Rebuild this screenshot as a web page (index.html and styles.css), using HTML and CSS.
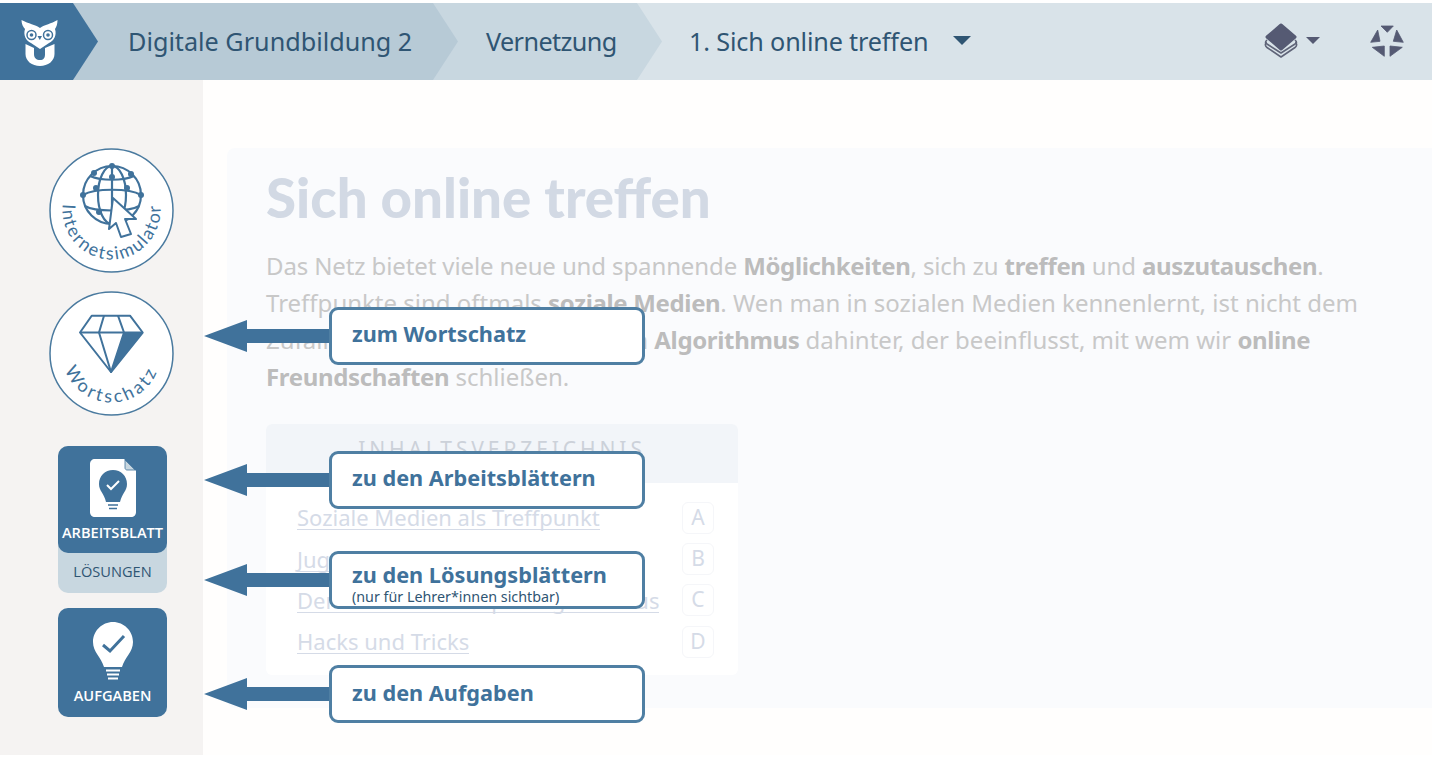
FILE: index.html
```html
<!DOCTYPE html>
<html lang="de">

<head>
    <meta charset="UTF-8">
    <meta name="viewport" content="width=device-width, initial-scale=1.0">
    <title>Sich online treffen - Digitale Grundbildung 2</title>
    <link rel="stylesheet" href="styles.css">
</head>

<body>
    <header class="topbar">
        <a class="crumb crumb-logo" href="#">
            <svg class="owl" viewBox="0 0 38 48" width="38" height="48">
                <path fill="#fff" d="M0.500 1 C8 5 14 5.500 19 9 C24 5.500 30 5 36.500 1 C36.500 5 35.500 8 34 10 C36 16 33 22 28 24 L19 30 L10 24 C5 22 2 16 4 10 C2 8 0.500 5 0.500 1 Z"/>
                <path fill="#fff" d="M4.500 25 L13 29 V35 C13 39 15.500 41 19 41 C22.500 41 24 39 24 35 V29 L33.500 25 V35 C33.500 42 27 47 19 47 C11 47 4.500 42 4.500 35 Z"/>
                <circle cx="10.500" cy="16" r="4.500" fill="none" stroke="#40729b" stroke-width="1.500"/>
                <circle cx="27" cy="16" r="4.500" fill="none" stroke="#40729b" stroke-width="1.500"/>
                <circle cx="10.500" cy="16" r="1.800" fill="#40729b"/>
                <circle cx="27" cy="16" r="1.800" fill="#40729b"/>
                <path fill="#40729b" d="M16.500 17 L21 17 L18.800 21 Z"/>
            </svg>
        </a>
        <a class="crumb crumb-course" href="#">Digitale Grundbildung 2</a>
        <a class="crumb crumb-topic" href="#">Vernetzung</a>
        <div class="crumb crumb-page">
            <span class="page-name">1. Sich online treffen</span>
            <span class="caret caret-dark"></span>
            <div class="tools">
                <button class="tool tool-layers">
                    <svg viewBox="0 0 34 36" width="34" height="36">
                        <path d="M2.500 19 C1 21 1 23 3 24.500 L17 34 L31 24.500 C33 23 33 21 31.500 19" fill="none" stroke="#5f6478" stroke-width="1.600" stroke-linejoin="round"/>
                        <path d="M3 17 C1 19 1 20 3 21 L17 30 L31 21 C33 20 33 19 31 17" fill="none" stroke="#5f6478" stroke-width="1.600" stroke-linejoin="round"/>
                        <path d="M17 2 L31 14 L17 26 L3 14 Z" fill="#555a73" stroke="#555a73" stroke-width="3" stroke-linejoin="round"/>
                    </svg>
                    <span class="caret"></span>
                </button>
                <button class="tool tool-star">
                    <svg viewBox="0 0 34 34" width="34" height="34">
                        <path fill="#555a73" stroke="#555a73" stroke-width="0.800" stroke-linejoin="round" d="M11 2 L23.300 2 L17.300 8.300 Z M26.700 6 L33.300 18.300 L23.300 17.300 Z M7.700 6 L0.700 18.300 L10 17.300 Z M2.300 23.300 L14.300 22 L14.300 32.300 Z M20 22 L32.300 23.300 L20 32.300 Z"/>
                    </svg>
                </button>
            </div>
        </div>
    </header>

    <div class="layout">
        <aside class="sidebar">
            <a class="round-link" href="#">
                <svg viewBox="0 0 125 125" width="125" height="125">
                    <defs>
                        <path id="arcSim" d="M62.500 13.500 A49 49 0 0 0 62.500 111.500 A49 49 0 0 0 62.500 13.500"/>
                    </defs>
                    <circle cx="62.500" cy="62.500" r="61.500" fill="#fff" stroke="#4a7a9f" stroke-width="1.500"/>
                    <g fill="none" stroke="#40729b" stroke-width="2.200">
                        <circle cx="63" cy="47" r="29"/>
                        <ellipse cx="63" cy="47" rx="14" ry="29"/>
                        <path d="M63 18 V76"/>
                        <path d="M41 28 C52 33 74 33 85 28"/>
                        <path d="M34 47 C46 40 80 40 92 47"/>
                        <path d="M36 58 C46 64 80 64 90 58"/>
                    </g>
                    <g fill="#40729b">
                        <circle cx="63" cy="18" r="3"/>
                        <circle cx="45" cy="25" r="3"/>
                        <circle cx="82" cy="26" r="3"/>
                        <circle cx="34" cy="47" r="3"/>
                        <circle cx="92" cy="47" r="3"/>
                        <circle cx="63" cy="29" r="3"/>
                        <circle cx="47" cy="40" r="3"/>
                        <circle cx="78" cy="40" r="3"/>
                        <circle cx="50" cy="64" r="3"/>
                    </g>
                    <path d="M64 50 L87 71 L76 71 L82 86 L72 89 L67 75 L60 81 Z" fill="#fff" stroke="#40729b" stroke-width="2" stroke-linejoin="round"/>
                    <text class="arc-text"><textPath href="#arcSim" startOffset="50%" text-anchor="middle">Internetsimulator</textPath></text>
                </svg>
            </a>
            <a class="round-link" href="#">
                <svg viewBox="0 0 125 125" width="125" height="125">
                    <defs>
                        <path id="arcWort" d="M62.500 13.500 A49 49 0 0 0 62.500 111.500 A49 49 0 0 0 62.500 13.500"/>
                    </defs>
                    <circle cx="62.500" cy="62.500" r="61.500" fill="#fff" stroke="#4a7a9f" stroke-width="1.500"/>
                    <path d="M75 41.500 L93.500 41.500 L62 81 Z" fill="#40729b"/>
                    <g fill="none" stroke="#40729b" stroke-width="2" stroke-linejoin="round">
                        <path d="M42.700 24.700 L81 24.700 L93.700 41.500 L62 81 L31 41.500 Z"/>
                        <path d="M31 41.500 H93.700"/>
                        <path d="M55 24.700 L50 41.500 L62 81 L75 41.500 L69 24.700"/>
                    </g>
                    <text class="arc-text arc-wide"><textPath href="#arcWort" startOffset="50%" text-anchor="middle">Wortschatz</textPath></text>
                </svg>
            </a>
            <div class="sheet-group">
                <a class="tile tile-sheet" href="#">
                    <svg viewBox="0 0 46 58" width="46" height="58">
                        <path fill="#fff" d="M5 0 H34 L46 12 V53 C46 56 44 58 41 58 H5 C2 58 0 56 0 53 V5 C0 2 2 0 5 0 Z"/>
                        <path fill="#c8d7e0" d="M35 1 L45 11 L37 11 C36 11 35 10 35 9 Z" stroke="#40729b" stroke-width="0.800"/>
                        <path fill="#40729b" d="M23 11 C31 11 37 17 37 25 C37 32 32 34 30 43 L16 43 C14 34 9 32 9 25 C9 17 15 11 23 11 Z"/>
                        <path d="M17 26 L21 30 L29 22" fill="none" stroke="#fff" stroke-width="2"/>
                        <path d="M18 46 H28 M19 49.500 H27" stroke="#40729b" stroke-width="1.500"/>
                    </svg>
                    <span>ARBEITSBLATT</span>
                </a>
                <a class="solutions" href="#">LÖSUNGEN</a>
            </div>
            <a class="tile tile-tasks" href="#">
                <svg viewBox="0 0 42 60" width="42" height="60">
                    <path fill="#fff" d="M21 1 C32 1 41 10 41 21 C41 31 33 36 30 46 L12 46 C9 36 1 31 1 21 C1 10 10 1 21 1 Z"/>
                    <path d="M11 24 L18 30 L32 15" fill="none" stroke="#40729b" stroke-width="3"/>
                    <path d="M14 49.500 H28 M15 53.500 H27 M16 57.500 H26" stroke="#fff" stroke-width="2"/>
                </svg>
                <span>AUFGABEN</span>
            </a>
        </aside>

        <main class="content">
            <article class="card">
                <h1>Sich online treffen</h1>
                <p class="intro">
                    <span class="tight">Das Netz bietet viele neue und spannende <b>Möglichkeiten</b>, sich zu <b>treffen</b> und <b>auszutauschen</b>.</span><br>
                    Treffpunkte sind oftmals <b>soziale Medien</b>. Wen man in sozialen Medien kennenlernt, ist nicht dem<br>
                    Zufall überlassen, es steckt oft ein <b>Algorithmus</b> dahinter, der beeinflusst, mit wem wir <b>online</b><br>
                    <b>Freundschaften</b> schließen.
                </p>
                <section class="toc">
                    <h2>INHALTSVERZEICHNIS</h2>
                    <ul>
                        <li><a href="#">Soziale Medien als Treffpunkt</a><span class="badge">A</span></li>
                        <li><a href="#">Jugendliche im Netz</a><span class="badge">B</span></li>
                        <li><a href="#">Der Freundeskreis per Algorithmus</a><span class="badge">C</span></li>
                        <li><a href="#">Hacks und Tricks</a><span class="badge">D</span></li>
                    </ul>
                </section>
            </article>
        </main>
    </div>

    <!-- hinweise liegen ueber der seite -->
    <div class="hint hint-words">
        <svg class="arrow" viewBox="0 0 126 32" width="126" height="32"><path d="M0 16 L43 0 V9 H126 V23 H43 V32 Z"/></svg>
        <div class="hint-box"><strong>zum Wortschatz</strong></div>
    </div>
    <div class="hint hint-sheets">
        <svg class="arrow" viewBox="0 0 126 32" width="126" height="32"><path d="M0 16 L43 0 V9 H126 V23 H43 V32 Z"/></svg>
        <div class="hint-box"><strong>zu den Arbeitsblättern</strong></div>
    </div>
    <div class="hint hint-solutions">
        <svg class="arrow" viewBox="0 0 126 32" width="126" height="32"><path d="M0 16 L43 0 V9 H126 V23 H43 V32 Z"/></svg>
        <div class="hint-box"><strong>zu den Lösungsblättern</strong><small>(nur für Lehrer*innen sichtbar)</small></div>
    </div>
    <div class="hint hint-tasks">
        <svg class="arrow" viewBox="0 0 126 32" width="126" height="32"><path d="M0 16 L43 0 V9 H126 V23 H43 V32 Z"/></svg>
        <div class="hint-box"><strong>zu den Aufgaben</strong></div>
    </div>
</body>

</html>
```

FILE: styles.css
```css
* {
    margin: 0;
    padding: 0;
    box-sizing: border-box;
}

body {
    font-family: "Noto Sans", Arial, sans-serif;
    background-color: #fff;
    height: 758px;
    overflow: hidden;
    padding-top: 3px;
    position: relative;
}

a {
    text-decoration: none;
}

.topbar {
    display: flex;
    height: 77px;
    background-color: #d9e3e9;
}

.crumb {
    display: flex;
    align-items: center;
    height: 100%;
    padding-bottom: 2px;
    font-size: 25.200px;
    color: #2f5573;
    clip-path: polygon(0 0, calc(100% - 25px) 0, 100% 50%, calc(100% - 25px) 100%, 0 100%);
    margin-left: -25px;
}

.crumb-logo {
    position: relative;
    z-index: 3;
    width: 98px;
    margin-left: 0;
    padding-left: 21px;
    padding-top: 2px;
    padding-bottom: 0;
    background-color: #40729b;
}

.crumb-course {
    position: relative;
    z-index: 2;
    width: 385px;
    padding-left: 55px;
    background-color: #b7cad6;
}

.crumb-topic {
    position: relative;
    z-index: 1;
    width: 229px;
    padding-left: 53px;
    letter-spacing: -0.600px;
    background-color: #c8d7e0;
}

.crumb-page {
    flex: 1;
    padding-left: 52px;
    clip-path: none;
    background-color: transparent;
}

.page-name {
    letter-spacing: -0.150px;
}

.caret {
    display: inline-block;
    width: 0;
    height: 0;
    border-left: 7px solid transparent;
    border-right: 7px solid transparent;
    border-top: 7px solid #555a73;
}

.caret-dark {
    margin-left: 25px;
    border-left-width: 9px;
    border-right-width: 9px;
    border-top: 9px solid #2f5573;
}

.tools {
    display: flex;
    align-items: center;
    margin-left: auto;
    padding-right: 28px;
    gap: 50px;
}

.tool {
    display: flex;
    align-items: center;
    gap: 8px;
    background: none;
    border: none;
}

.layout {
    display: flex;
    height: 675px;
}

.sidebar {
    width: 203px;
    background-color: #f5f3f2;
    display: flex;
    flex-direction: column;
    padding: 68px 0 0 49px;
}

.round-link {
    display: block;
    width: 125px;
    height: 125px;
    margin-bottom: 18px;
}

.round-link + .sheet-group {
    margin-top: 12px;
}

.arc-text {
    font-family: "Lato", sans-serif;
    font-size: 18px;
    letter-spacing: 1.800px;
    fill: #40729b;
}

.arc-wide {
    letter-spacing: 3px;
}

.sheet-group {
    width: 109px;
    margin-left: 9px;
    border-radius: 10px;
    background-color: #c8d7e0;
    margin-bottom: 15px;
}

.tile {
    display: flex;
    flex-direction: column;
    align-items: center;
    width: 109px;
    height: 107px;
    background-color: #40729b;
    border-radius: 10px;
    color: #fff;
    font-family: "Open Sans", sans-serif;
    font-size: 14.600px;
    font-weight: 600;
    padding-top: 13px;
}

.tile span {
    margin-top: 5px;
    white-space: nowrap;
}

.tile-tasks {
    margin-left: 9px;
    height: 109px;
}

.tile-tasks span {
    margin-top: 4px;
}

.solutions {
    display: block;
    height: 40px;
    line-height: 37px;
    text-align: center;
    color: #2f5573;
    font-family: "Open Sans", sans-serif;
    font-size: 14.600px;
}

.content {
    flex: 1;
    background-color: #fffefd;
    padding: 68px 0 0 24px;
}

.card {
    height: 560px;
    background-color: #fafbfd;
    padding: 18px 0 0 39px;
    border-radius: 8px 0 0 8px;
}

h1 {
    font-family: "Lato", sans-serif;
    font-size: 54.600px;
    line-height: 62px;
    font-weight: 900;
    color: #d2d9e4;
}

.intro {
    margin-top: 19px;
    font-size: 24px;
    line-height: 37px;
    color: #c8c8c8;
}

.intro b {
    color: #bcbcbc;
    letter-spacing: -0.350px;
}

.tight {
    letter-spacing: -0.120px;
}

.toc {
    width: 472px;
    margin-top: 29px;
    background-color: #fff;
    border-radius: 6px;
    height: 251px;
}

.toc h2 {
    height: 59px;
    padding-top: 11px;
    text-align: center;
    font-size: 21px;
    font-weight: 400;
    letter-spacing: 3.900px;
    color: #ccd1d9;
    background-color: #f2f5f9;
    border-radius: 6px 6px 0 0;
}

.toc ul {
    list-style-type: none;
    padding: 14px 24px 0 31px;
}

.toc li {
    display: flex;
    align-items: center;
    justify-content: space-between;
    height: 41.400px;
}

.toc a {
    font-size: 22px;
    color: #d5dbe7;
    border-bottom: 1px solid #d5dbe7;
    line-height: 24px;
}

.badge {
    width: 32px;
    height: 32px;
    border: 1px solid #f5f6f9;
    border-radius: 6px;
    text-align: center;
    font-size: 21px;
    line-height: 28px;
    color: #d5dbe7;
}

.hint {
    position: absolute;
    left: 204px;
    display: flex;
    align-items: center;
}

.hint-words {
    top: 307px;
}

.hint-sheets {
    top: 451px;
}

.hint-solutions {
    top: 551px;
}

.hint-tasks {
    top: 665px;
}

.arrow {
    fill: #40729b;
    margin-right: -1px;
}

.hint-box {
    display: flex;
    flex-direction: column;
    justify-content: center;
    width: 316px;
    height: 58px;
    padding: 0 0 5px 20px;
    background-color: #fff;
    border: 3px solid #4f7fa3;
    border-radius: 9px;
    color: #40729b;
}

.hint-box strong {
    font-size: 21.700px;
    line-height: 26px;
}

.hint-solutions .hint-box {
    padding: 6px 0 0 20px;
}

.hint-tasks .hint-box {
    padding-bottom: 2px;
}

.hint-box small {
    font-size: 14.300px;
    line-height: 17px;
    color: #2f5573;
}
```
